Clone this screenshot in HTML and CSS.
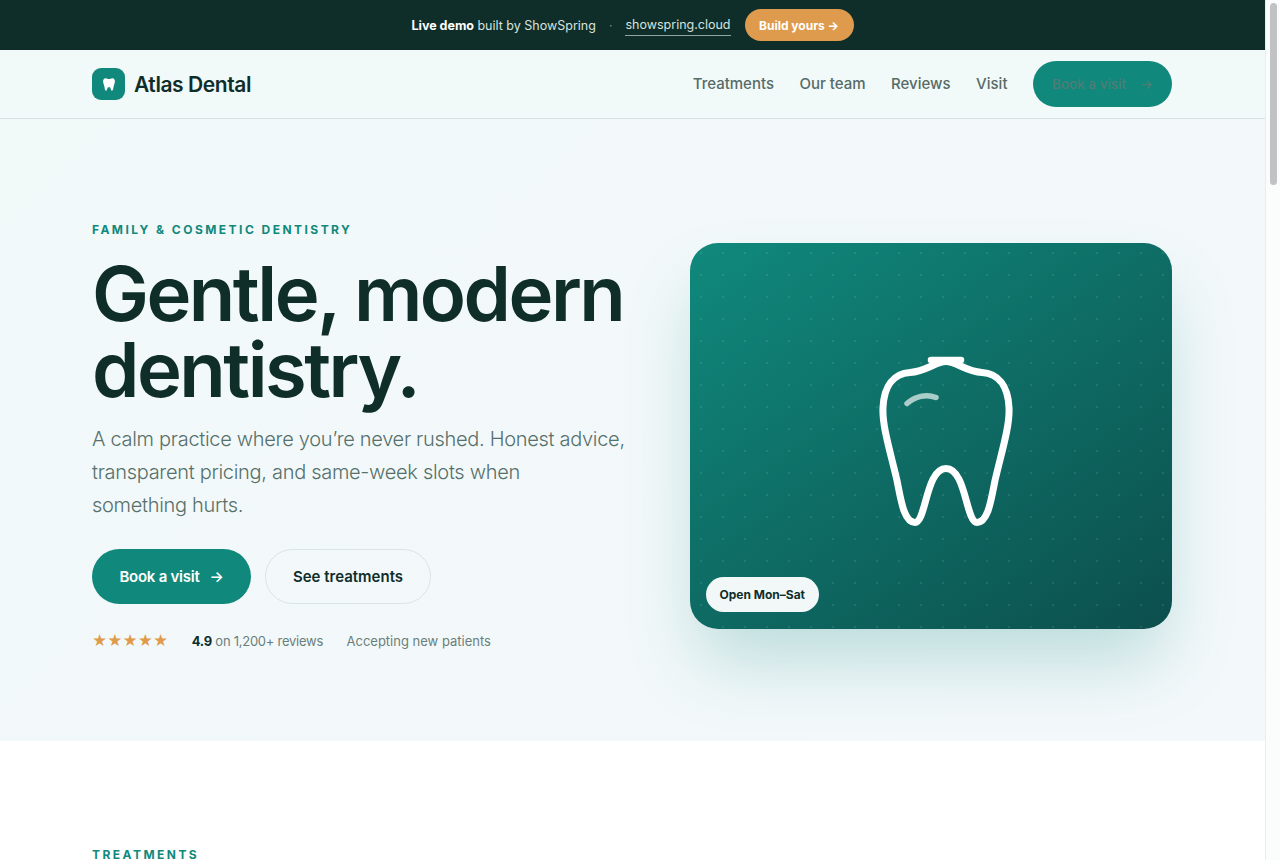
FILE: index.html
```html
<!DOCTYPE html>
<html lang="en">
<head>
  <meta charset="UTF-8">
  <meta name="viewport" content="width=device-width, initial-scale=1.0">
  <title>Atlas Dental</title>
  <link rel="stylesheet" href="styles.css">
</head>
<body>
  <main class="page">
    <div class="demo-bar">
      <span class="demo-text"><b>Live demo</b> built by ShowSpring</span>
      <span class="demo-dot">·</span>
      <a class="demo-link" href="#">showspring.cloud</a>
      <a class="demo-cta" href="#">Build yours →</a>
    </div>

    <header class="nav">
      <div class="wrap nav-inner">
        <a class="brand" href="#">
          <span class="brand-mark">
            <svg width="14" height="15" viewBox="0 0 16 18"><path d="M8 2.400C6.600 2.400 5.600 1.400 3.900 1.400 1.900 1.400.9 3.200.9 5.200c0 2.300 1 3.600 1.500 6 .4 2 .7 5.400 2 5.400 1.400 0 1.300-4.600 3.600-4.600s2.200 4.600 3.600 4.600c1.300 0 1.600-3.400 2-5.400.5-2.400 1.500-3.700 1.500-6 0-2-1-3.800-3-3.800-1.700 0-2.700 1-4.100 1z" fill="#fff"/></svg>
          </span>
          <span class="brand-name">Atlas Dental</span>
        </a>
        <nav class="nav-links">
          <a href="#">Treatments</a>
          <a href="#">Our team</a>
          <a href="#">Reviews</a>
          <a href="#">Visit</a>
          <a class="nav-cta" href="#">Book a visit <span class="arrow">→</span></a>
        </nav>
      </div>
    </header>

    <section class="hero">
      <div class="wrap hero-grid">
        <div class="hero-copy">
          <p class="eyebrow">FAMILY &amp; COSMETIC DENTISTRY</p>
          <h1>Gentle, modern dentistry.</h1>
          <p class="lead">A calm practice where you’re never rushed. Honest advice, transparent pricing, and same-week slots when<br>something hurts.</p>
          <div class="hero-actions">
            <a class="btn btn-primary" href="#">Book a visit <span class="arrow">→</span></a>
            <a class="btn btn-ghost" href="#">See treatments</a>
          </div>
          <div class="hero-meta">
            <span class="stars">★★★★★</span>
            <span class="rating"><b>4.9</b> on 1,200+ reviews</span>
            <span>Accepting new patients</span>
          </div>
        </div>
        <div class="hero-card">
          <svg class="tooth" width="200" height="240" viewBox="-29 -24.5 200 240" fill="none" stroke="#fff" stroke-linecap="round" stroke-linejoin="round">
            <path d="M86 21C76 21 66 31 50 32 34 33 24 45 23 67 22 85 30 110 37 140 41 160 44 182 55 182 66 182 66 128 86 128 106 128 106 182 117 182 128 182 131 160 135 140 142 110 150 85 149 67 148 45 138 33 122 32 106 31 96 21 86 21Z" stroke-width="7"/>
            <path d="M71 19.500H101" stroke-width="6.500"/>
            <path d="M47 63C55 56 66 53 76 57" stroke-width="5.500" opacity=".65"/>
          </svg>
          <span class="hero-badge">Open Mon–Sat</span>
        </div>
      </div>
    </section>

    <section class="treatments">
      <div class="wrap">
        <p class="eyebrow">TREATMENTS</p>
      </div>
    </section>
  </main>
  <div class="scrollbar"><div class="scrollbar-thumb"></div></div>
</body>
</html>
```
FILE: styles.css
```css
* {
  box-sizing: border-box;
}
body {
  margin: 0;
  height: 100vh;
  overflow: hidden;
  display: flex;
  font-family: Inter, "Liberation Sans", sans-serif;
  color: #0f2e2a;
  background: #fff;
}
a {
  text-decoration: none;
  color: inherit;
}
.page {
  flex: 1;
  min-width: 0;
}
.wrap {
  width: 1080px;
  margin-left: 92px;
}

.scrollbar {
  width: 15px;
  flex: none;
  padding: 3px 3px 0 4px;
  background: #fbfcfc;
  border-left: 1px solid #e9eded;
}
.scrollbar-thumb {
  height: 182px;
  border-radius: 4px;
  background: #c1c2c4;
}

.demo-bar {
  height: 50px;
  display: flex;
  align-items: center;
  justify-content: center;
  background: #0f2e2a;
  color: #d6e2df;
  font-size: 12.5px;
}
.demo-text b {
  color: #fff;
  font-weight: 700;
}
.demo-dot {
  margin: 0 13px;
  color: #6f8a85;
}
.demo-link {
  margin-top: 2px;
  padding-bottom: 3px;
  border-bottom: 1px solid #8fa6a1;
}
.demo-cta {
  margin-left: 14px;
  height: 32px;
  padding: 0 14.5px;
  display: flex;
  align-items: center;
  border-radius: 16px;
  background: #de9a4d;
  color: #fff;
  font-weight: 700;
  font-size: 12px;
}

.nav {
  background: #f2f9f9;
  border-bottom: 1px solid #d9e2e2;
}
.nav-inner {
  height: 68px;
  display: flex;
  align-items: center;
  justify-content: space-between;
}
.brand {
  display: flex;
  align-items: center;
  gap: 9px;
}
.brand-mark {
  width: 33px;
  height: 32px;
  border-radius: 9px;
  display: flex;
  align-items: center;
  justify-content: center;
  background: #10897c;
}
.brand-name {
  font-size: 21px;
  line-height: 34px;
  padding-top: 1px;
  font-weight: 600;
  letter-spacing: -0.02em;
}
.nav-links {
  display: flex;
  align-items: center;
  gap: 25.5px;
  font-size: 15px;
  line-height: 20px;
  font-weight: 500;
  color: #566b67;
}
.nav-cta {
  height: 46px;
  width: 139px;
  border-radius: 23px;
  display: flex;
  align-items: center;
  justify-content: center;
  gap: 14px;
  background: #10897c;
  color: #4f7c76;
  font-size: 13.5px;
}

.hero {
  height: 622px;
  background: linear-gradient(135deg, #f2f9f9, #f3f8fb);
}
.hero-grid {
  height: 100%;
  padding-top: 12px;
  display: grid;
  grid-template-columns: 1fr 482px;
  gap: 56px;
  align-items: center;
}
.eyebrow {
  margin: 0;
  font-size: 12px;
  line-height: 16px;
  font-weight: 700;
  letter-spacing: 0.205em;
  color: #10897c;
}
h1 {
  margin: 17px 0 0;
  font-size: 76px;
  line-height: 76px;
  font-weight: 600;
  letter-spacing: -0.033em;
  color: #0f2e2a;
}
.lead {
  margin: 16px 0 0;
  font-size: 20px;
  line-height: 33px;
  font-weight: 300;
  letter-spacing: -0.015em;
  color: #56706b;
}
.hero-actions {
  margin-top: 27px;
  display: flex;
  gap: 14px;
}
.btn {
  height: 55px;
  display: flex;
  align-items: center;
  border-radius: 28px;
  font-size: 15px;
  font-weight: 600;
}
.btn-primary {
  width: 159px;
  justify-content: center;
  gap: 10px;
  background: #10897c;
  color: #fff;
  letter-spacing: -0.25px;
}
.btn-ghost {
  width: 166px;
  justify-content: center;
  border: 1.5px solid #dbe4e5;
  color: #0f2e2a;
}
.hero-meta {
  margin-top: 28px;
  display: flex;
  align-items: center;
  gap: 23.5px;
  font-size: 13px;
  color: #6a7f7b;
}
.stars {
  color: #e09a4a;
  font-size: 14.6px;
}
.rating {
  letter-spacing: -0.02em;
}
.rating b {
  color: #0f2e2a;
  font-weight: 700;
}

.hero-card {
  position: relative;
  height: 386px;
  border-radius: 28px;
  display: flex;
  align-items: center;
  justify-content: center;
  background:
    radial-gradient(circle, rgba(255, 255, 255, 0.09) 1px, transparent 1.5px) 0 -1px / 22px 22px,
    linear-gradient(145deg, #10897c, #0c4f4d);
  box-shadow: 0 40px 70px -10px rgba(16, 137, 124, 0.25);
}
.hero-badge {
  position: absolute;
  left: 16px;
  bottom: 17px;
  height: 35px;
  padding: 0 13.5px;
  display: flex;
  align-items: center;
  border-radius: 18px;
  background: #f2f8f8;
  font-size: 12px;
  font-weight: 700;
  color: #0f2e2a;
}

.treatments {
  padding-top: 106px;
  background: #fff;
}
```
